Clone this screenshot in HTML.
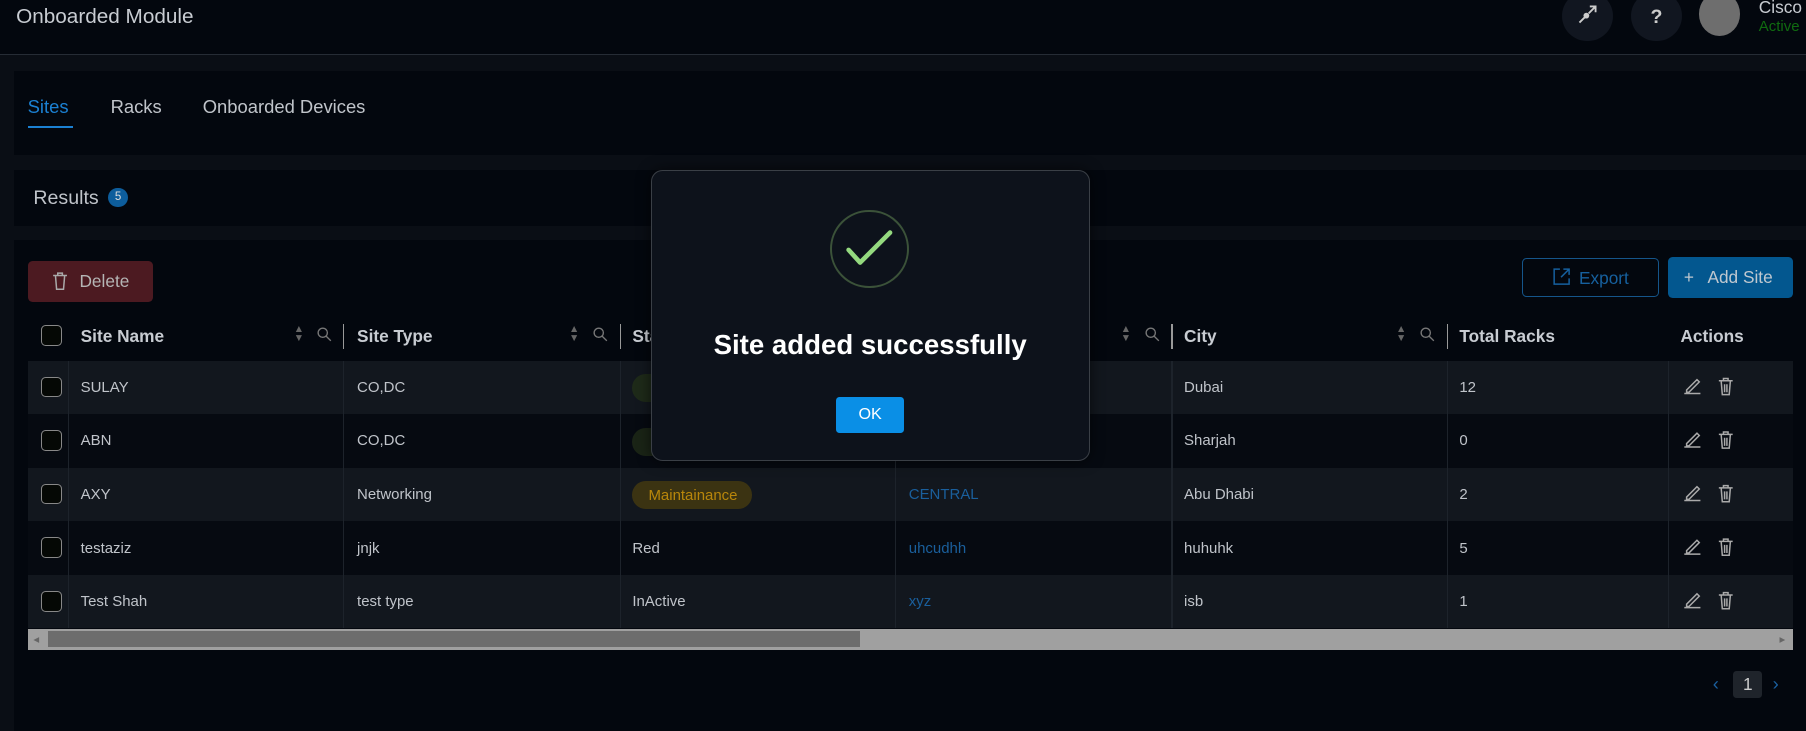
<!DOCTYPE html>
<html><head><meta charset="utf-8"><style>
*{box-sizing:border-box;margin:0;padding:0}
html,body{width:1806px;height:731px;overflow:hidden;background:#03070e}
#w{zoom:1.1518;width:1568px;height:635px;position:relative;font-family:"Liberation Sans",sans-serif;color:#c5c9cf;background:#0a0e15}
.a{position:absolute}
.row{position:absolute;left:24px;width:1533px;height:46.5px;font-size:13px;color:#c0c4ca}
.row span{position:absolute;top:16px}
.vl{position:absolute;top:0;bottom:0;width:1px;background:#1d232b}
.cb{position:absolute;left:12px;width:18px;height:18px;border:1.5px solid #888;border-radius:4px;background:#050805}
.hd{position:absolute;top:283px;font-size:15px;font-weight:bold;color:#c8ccd2}
.srt{position:absolute;top:282px;color:#666;font-size:9px;line-height:8px}
.mg{position:absolute;top:284px}
</style></head><body><div id="w">
<div class="a" style="left:0;top:0;width:1568px;height:48px;background:#03070e;border-bottom:1px solid #262c35"></div>
<div class="a" style="left:14px;top:4px;font-size:18px;color:#c8ccd2">Onboarded Module</div>
<div class="a" style="left:1356px;top:-8px;width:44px;height:44px;border-radius:50%;background:#111620"></div>
<svg class="a" style="left:1368px;top:3px" width="20" height="20" viewBox="0 0 20 20"><path d="M3 17L9 11M12 3h5v5M17 3l-6 6" stroke="#ccc" stroke-width="1.6" fill="none"/><circle cx="9" cy="11" r="2.5" fill="#ccc"/></svg>
<div class="a" style="left:1416px;top:-8px;width:44px;height:44px;border-radius:50%;background:#111620"></div>
<div class="a" style="left:1433px;top:5px;font-size:17px;font-weight:bold;color:#ccc">?</div>
<div class="a" style="left:1475px;top:-7px;width:36px;height:38px;border-radius:50%;background:#6e6e6e"></div>
<div class="a" style="left:1527px;top:-3px;font-size:15px;color:#c8ccd2">Cisco</div>
<div class="a" style="left:1527px;top:16px;font-size:13px;color:#106b10">Active</div>

<div class="a" style="left:12px;top:62px;width:1556px;height:73px;background:#03070e"></div>
<div class="a" style="left:24px;top:83px;font-size:16px;color:#1b80d2">Sites</div>
<div class="a" style="left:24px;top:109px;width:39px;height:2px;background:#1b80d2"></div>
<div class="a" style="left:96px;top:83px;font-size:16px;color:#c0c4ca">Racks</div>
<div class="a" style="left:176px;top:83px;font-size:16px;color:#c0c4ca">Onboarded Devices</div>

<div class="a" style="left:12px;top:148px;width:1556px;height:48px;background:#03070e"></div>
<div class="a" style="left:29px;top:162px;font-size:17px;color:#c0c4ca">Results</div>
<div class="a" style="left:94px;top:163px;width:17px;height:17px;border-radius:50%;background:#0d5d9c;color:#ddd;font-size:10px;text-align:center;line-height:17px">5</div>

<div class="a" style="left:12px;top:208px;width:1556px;height:427px;background:#03070e"></div>
<div class="a" style="left:24px;top:227px;width:109px;height:35px;background:#4c1a21;border-radius:4px;font-size:15px;color:#b5b5b5;padding:8px 0 0 45px">Delete</div>
<svg class="a" style="left:45px;top:236px" width="14" height="16" viewBox="0 0 14 16"><path d="M1 3h12M5 3V1h4v2M3 3l1 12h6l1-12" stroke="#aaa" stroke-width="1.3" fill="none"/></svg>
<div class="a" style="left:1321px;top:224px;width:119px;height:34px;border:1px solid #15558a;border-radius:4px;font-size:15px;color:#16609e;padding:8px 0 0 49px">Export</div>
<svg class="a" style="left:1348px;top:233px" width="15" height="15" viewBox="0 0 15 15"><path d="M6 1H1v13h13V9M9 1h5v5M14 1L7 8" stroke="#16609e" stroke-width="1.3" fill="none"/></svg>
<div class="a" style="left:1448px;top:223px;width:109px;height:36px;background:#03578f;border-radius:4px;font-size:15px;color:#c0c8d0;padding:9px 0 0 14px">+ &nbsp; Add Site</div>

<svg width="0" height="0" style="position:absolute"><defs><g id="mgl"><circle cx="5" cy="5" r="4" stroke="#777" stroke-width="1.2" fill="none"/><path d="M8 8l4 4" stroke="#777" stroke-width="1.2"/></g></defs></svg>
<div class="cb" style="left:36px;top:282px"></div>
<div class="hd" style="left:70px">Site Name</div>
<div class="srt" style="left:255px">▲<br>▼</div><svg class="mg" style="left:275px" width="13" height="13"><use href="#mgl"/></svg>
<div class="a" style="left:298px;top:281px;width:1px;height:22px;background:#999"></div>
<div class="hd" style="left:310px">Site Type</div>
<div class="srt" style="left:494px">▲<br>▼</div><svg class="mg" style="left:515px" width="13" height="13"><use href="#mgl"/></svg>
<div class="a" style="left:538px;top:281px;width:1px;height:22px;background:#999"></div>
<div class="hd" style="left:549px">Status</div>
<div class="srt" style="left:973px">▲<br>▼</div><svg class="mg" style="left:994px" width="13" height="13"><use href="#mgl"/></svg>
<div class="a" style="left:1017px;top:281px;width:1px;height:22px;background:#999"></div>
<div class="hd" style="left:1028px">City</div>
<div class="srt" style="left:1212px">▲<br>▼</div><svg class="mg" style="left:1233px" width="13" height="13"><use href="#mgl"/></svg>
<div class="a" style="left:1256px;top:281px;width:1px;height:22px;background:#999"></div>
<div class="hd" style="left:1267px">Total Racks</div>
<div class="hd" style="left:1459px">Actions</div>

<div class="row" style="top:313px;background:#12171e"><div class="cb" style="top:14px"></div><div class="vl" style="left:35px"></div><span style="left:46px">SULAY</span><div class="vl" style="left:274px"></div><span style="left:286px">CO,DC</span><div class="vl" style="left:514px"></div><div class="a" style="left:525px;top:12px;width:60px;height:24px;border-radius:12px;background:#1e2a19"></div><div class="vl" style="left:753px"></div><div class="vl" style="left:993px"></div><span style="left:1004px">Dubai</span><div class="vl" style="left:1232px"></div><span style="left:1243px">12</span><div class="vl" style="left:1424px"></div></div>
<div class="row" style="top:359.5px;background:#060a11"><div class="cb" style="top:14px"></div><div class="vl" style="left:35px"></div><span style="left:46px">ABN</span><div class="vl" style="left:274px"></div><span style="left:286px">CO,DC</span><div class="vl" style="left:514px"></div><div class="a" style="left:525px;top:12px;width:60px;height:24px;border-radius:12px;background:#1a2416"></div><div class="vl" style="left:753px"></div><div class="vl" style="left:993px"></div><span style="left:1004px">Sharjah</span><div class="vl" style="left:1232px"></div><span style="left:1243px">0</span><div class="vl" style="left:1424px"></div></div>
<div class="row" style="top:406px;background:#12171e"><div class="cb" style="top:14px"></div><div class="vl" style="left:35px"></div><span style="left:46px">AXY</span><div class="vl" style="left:274px"></div><span style="left:286px">Networking</span><div class="vl" style="left:514px"></div><div class="a" style="left:525px;top:12px;width:104px;height:24px;border-radius:12px;background:#3b3312;color:#b8860b;font-size:13px;padding:5px 0 0 14px">Maintainance</div><div class="vl" style="left:753px"></div><span style="left:765px;color:#1a5f9c">CENTRAL</span><div class="vl" style="left:993px"></div><span style="left:1004px">Abu Dhabi</span><div class="vl" style="left:1232px"></div><span style="left:1243px">2</span><div class="vl" style="left:1424px"></div></div>
<div class="row" style="top:452.5px;background:#060a11"><div class="cb" style="top:14px"></div><div class="vl" style="left:35px"></div><span style="left:46px">testaziz</span><div class="vl" style="left:274px"></div><span style="left:286px">jnjk</span><div class="vl" style="left:514px"></div><span style="left:525px">Red</span><div class="vl" style="left:753px"></div><span style="left:765px;color:#1a5f9c">uhcudhh</span><div class="vl" style="left:993px"></div><span style="left:1004px">huhuhk</span><div class="vl" style="left:1232px"></div><span style="left:1243px">5</span><div class="vl" style="left:1424px"></div></div>
<div class="row" style="top:499px;background:#12171e"><div class="cb" style="top:14px"></div><div class="vl" style="left:35px"></div><span style="left:46px">Test Shah</span><div class="vl" style="left:274px"></div><span style="left:286px">test type</span><div class="vl" style="left:514px"></div><span style="left:525px">InActive</span><div class="vl" style="left:753px"></div><span style="left:765px;color:#1a5f9c">xyz</span><div class="vl" style="left:993px"></div><span style="left:1004px">isb</span><div class="vl" style="left:1232px"></div><span style="left:1243px">1</span><div class="vl" style="left:1424px"></div></div>

<svg class="a" style="left:1460px;top:326px" width="50" height="210" viewBox="0 0 50 210">
<g id="ic" stroke="#aaa" stroke-width="1.3" fill="none"><path d="M2 16h14M4 13l9-9 2 2-9 9H4z"/><path d="M32 5h12M36 5V3h4v2M34 5l1 12h6l1-12M37 8v7M39 8v7"/></g>
<use href="#ic" y="46.5"/><use href="#ic" y="93"/><use href="#ic" y="139.5"/><use href="#ic" y="186"/></svg>

<div class="a" style="left:24px;top:546px;width:1533px;height:18px;background:#a0a0a0"></div>
<div class="a" style="left:42px;top:548px;width:705px;height:14px;background:#6d6d6d"></div>
<div class="a" style="left:29px;top:549px;color:#666;font-size:10px">◂</div>
<div class="a" style="left:1545px;top:549px;color:#666;font-size:10px">▸</div>

<div class="a" style="left:1487px;top:584px;color:#1a60a0;font-size:16px">&lsaquo;</div>
<div class="a" style="left:1505px;top:583px;width:25px;height:23px;background:#1f242b;border-radius:3px;color:#ccc;font-size:15px;text-align:center;line-height:23px">1</div>
<div class="a" style="left:1539px;top:584px;color:#1a60a0;font-size:16px">&rsaquo;</div>

<div class="a" style="left:565px;top:148px;width:381px;height:252px;background:#0d121b;border:1.5px solid #3a3f46;border-radius:10px;box-shadow:0 0 12px rgba(0,0,0,.6)"></div>
<div class="a" style="left:721px;top:182px;width:68px;height:68px;border-radius:50%;border:2px solid #3b5239"></div>
<svg class="a" style="left:733px;top:198px" width="44" height="36" viewBox="0 0 44 36"><path d="M4 19l10 11L40 4" stroke="#94d97f" stroke-width="4" fill="none" stroke-linecap="round" stroke-linejoin="round"/></svg>
<div class="a" style="left:565px;top:286px;width:381px;text-align:center;font-size:24px;font-weight:bold;color:#fff">Site added successfully</div>
<div class="a" style="left:726px;top:345px;width:59px;height:31px;background:#0a8fe6;border-radius:3px;color:#fff;font-size:14px;text-align:center;line-height:31px">OK</div>
</div></body></html>
